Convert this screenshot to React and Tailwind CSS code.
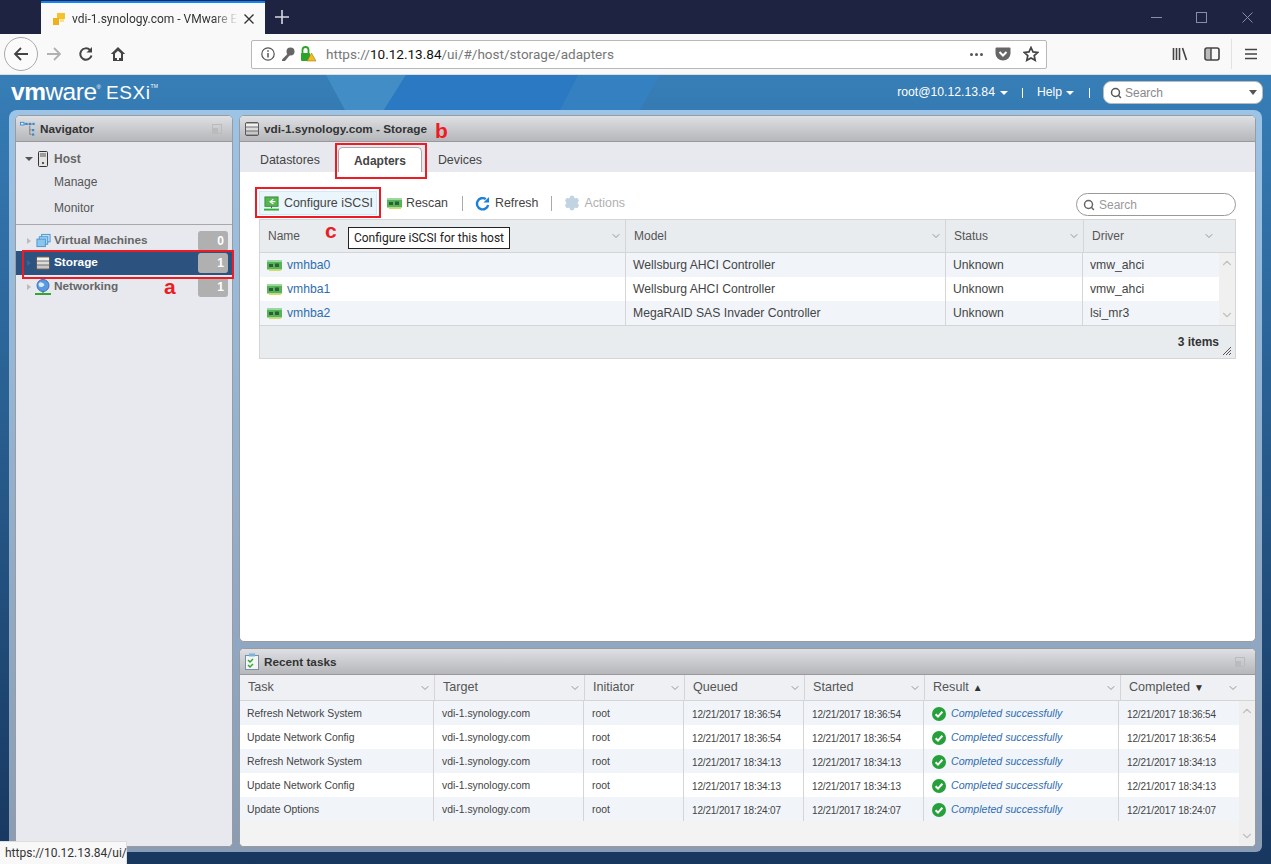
import { ChevronDown, ChevronUp, Search, Settings } from "lucide-react";

const adapters = [
  { name: "vmhba0", model: "Wellsburg AHCI Controller", driver: "vmw_ahci" },
  { name: "vmhba1", model: "Wellsburg AHCI Controller", driver: "vmw_ahci" },
  { name: "vmhba2", model: "MegaRAID SAS Invader Controller", driver: "lsi_mr3" },
];

const tasks = [
  { task: "Refresh Network System", time: "12/21/2017 18:36:54" },
  { task: "Update Network Config", time: "12/21/2017 18:36:54" },
  { task: "Refresh Network System", time: "12/21/2017 18:34:13" },
  { task: "Update Network Config", time: "12/21/2017 18:34:13" },
  { task: "Update Options", time: "12/21/2017 18:24:07" },
];

const StorageIcon = ({ className }) => (
  <svg viewBox="0 0 14 14" className={className}>
    <rect x="0.5" y="0.5" width="13" height="13" rx="1.5" fill="#6f6f6f" stroke="#5a5a5a" />
    <rect x="1" y="1.5" width="12" height="3" fill="#f0f0f0" />
    <rect x="1" y="5.5" width="12" height="3" fill="#dcdcdc" />
    <rect x="1" y="9.5" width="12" height="3" fill="#c8c8c8" />
  </svg>
);

const CardIcon = () => (
  <svg viewBox="0 0 15 11" className="w-[15px] h-[11px] shrink-0">
    <rect x="0" y="0.5" width="15" height="9" fill="#55b455" />
    <rect x="0" y="0.5" width="15" height="1.5" fill="#9ad89a" />
    <rect x="2" y="4" width="4" height="3" fill="#2f5f3a" />
    <rect x="8" y="3.5" width="4" height="3.5" fill="#2f5f3a" />
    <rect x="2" y="9.5" width="12" height="1.5" fill="#d4d96a" />
  </svg>
);

const CheckIcon = () => (
  <svg viewBox="0 0 14 14" className="w-[14px] h-[14px] shrink-0">
    <circle cx="7" cy="7" r="7" fill="#25a03a" />
    <path d="M3.6 7.2 6 9.6l4.4-4.8" fill="none" stroke="#fff" strokeWidth="2" />
  </svg>
);

const Caret = ({ className = "border-t-[#555]" }) => (
  <span className={`inline-block w-0 h-0 border-x-[4px] border-x-transparent border-t-[4px] ${className}`} />
);

const Panel = ({ icon, title, right, className, children }) => (
  <div className={`flex flex-col bg-white border border-[#9b9b9b] rounded-[5px] overflow-hidden ${className}`}>
    <div className="h-[26px] shrink-0 flex items-center px-[6px] gap-[5px] bg-gradient-to-b from-[#dfe0e3] to-[#b5b7ba] border-b border-[#999]">
      {icon}
      <span className="text-[11.75px] font-bold text-[#333]">{title}</span>
      {right && (
        <span className="ml-auto mr-[4px] w-[10px] h-[10px] border border-[#bbb] flex items-end">
          <i className="w-[5px] h-[5px] bg-[#bbb]" />
        </span>
      )}
    </div>
    {children}
  </div>
);

const NavRow = ({ icon, label, count, active, height }) => (
  <div className={`${height} flex items-center text-[11.8px] font-bold ${active ? "bg-[#2c5380] text-white" : "text-[#666]"}`}>
    <span className={`ml-[11px] w-0 h-0 border-y-[3px] border-y-transparent border-l-[4px] ${active ? "border-l-[#3f6390]" : "border-l-[#bbb]"}`} />
    <span className="ml-[3px] w-[18px] flex justify-center">{icon}</span>
    <span className="ml-[2px] flex-1">{label}</span>
    <span className="mr-[4px] w-[30px] h-[20px] rounded-[3px] bg-[#b0b0b0] text-white text-[12px] text-right pr-[4px] leading-[20px]">{count}</span>
  </div>
);

const HeaderCell = ({ label, mark, className = "" }) => (
  <div className={`flex items-center pl-[8px] pr-[3px] border-r border-[#d5d5d5] text-[#555] ${className}`}>
    <span>{label}</span>
    {mark && <span className="ml-[4px] text-[10px] text-[#333]">{mark}</span>}
    <ChevronDown className="ml-auto text-[#777]" size={12} strokeWidth={1.5} />
  </div>
);

export default function App() {
  return (
    <div className="relative w-[1271px] h-[864px] overflow-hidden flex flex-col font-['Liberation_Sans',Arial,sans-serif] bg-gradient-to-b from-[#3a85c0] to-[#17375f]">
      {/* browser tab strip */}
      <div className="h-[34px] shrink-0 bg-[#1e2341] flex items-end pl-[41px] text-white">
        <div className="w-[224px] h-[33px] bg-[#f9f9fa] border-t-2 border-[#0a84ff] flex items-center pl-[11px] font-['Roboto',sans-serif] text-[12px] text-[#333]">
          <svg viewBox="0 0 14 14" className="w-[14px] h-[14px] shrink-0">
            <rect x="5" y="1" width="8" height="6" fill="#f5c22b" />
            <rect x="1" y="6" width="6" height="7" fill="#f0b01a" />
            <rect x="8" y="7" width="4" height="3" fill="#f9e08a" />
          </svg>
          <span className="ml-[6px] w-[166px] whitespace-nowrap [mask-image:linear-gradient(to_right,#000_85%,transparent)]">vdi-1.synology.com - VMware E</span>
          <svg viewBox="0 0 10 10" className="w-[10px] h-[10px] ml-[6px]"><path d="M0.5.5l9 9M9.500.5l-9 9" stroke="#333" strokeWidth="1.4" /></svg>
        </div>
        <svg viewBox="0 0 14 14" className="w-[14px] h-[14px] ml-[10px] mb-[10px]"><path d="M7 0v14M0 7h14" stroke="#d8d9e0" strokeWidth="1.6" /></svg>
        <div className="ml-auto flex items-center h-full">
          <svg viewBox="0 0 11 11" className="w-[11px] h-[11px] mr-[34px]"><path d="M0 5.500h11" stroke="#8a8da3" /></svg>
          <svg viewBox="0 0 11 11" className="w-[11px] h-[11px] mr-[35px]"><rect x=".5" y=".5" width="10" height="10" fill="none" stroke="#8a8da3" /></svg>
          <svg viewBox="0 0 11 11" className="w-[11px] h-[11px] mr-[18px]"><path d="M.5.5l10 10M10.500.5l-10 10" stroke="#8a8da3" /></svg>
        </div>
      </div>

      {/* browser toolbar */}
      <div className="h-[41px] shrink-0 bg-[#f9f9fa] border-b border-[#ddd] flex items-center pl-[4px]">
        <div className="w-[34px] h-[34px] rounded-full border border-[#aaa] bg-[#fbfbfb] flex items-center justify-center">
          <svg viewBox="0 0 16 16" className="w-[16px] h-[16px]"><path d="M15 8H2M8 2 2 8l6 6" fill="none" stroke="#444" strokeWidth="1.8" /></svg>
        </div>
        <svg viewBox="0 0 16 16" className="w-[16px] h-[16px] ml-[8px]"><path d="M1 8h13M8 2l6 6-6 6" fill="none" stroke="#b1b1b1" strokeWidth="1.8" /></svg>
        <svg viewBox="0 0 16 16" className="w-[16px] h-[16px] ml-[16px]"><path d="M13.500 9.500A5.700 5.700 0 1 1 12 4" fill="none" stroke="#444" strokeWidth="2" /><path d="M14 1v5.500H8.500z" fill="#444" /></svg>
        <svg viewBox="0 0 16 16" className="w-[16px] h-[16px] ml-[16px]"><path d="M8 1 .8 8h2.200v7h10V8h2.200zM7 11h2v3H7z" fill="#444" fillRule="evenodd" /><path d="M5 12V7.500L8 4.700l3 2.800V12z" fill="#f9f9fa" /></svg>
        <div className="ml-[125px] w-[796px] h-[29px] bg-white border border-[#b8b8b8] rounded-[2px] flex items-center pl-[9px] pr-[7px] font-['Roboto',sans-serif] text-[13.55px] text-[#777]">
          <svg viewBox="0 0 14 14" className="w-[14px] h-[14px] shrink-0"><circle cx="7" cy="7" r="6.200" fill="none" stroke="#555" strokeWidth="1.200" /><path d="M7 6v4.500M7 3.200v1.500" stroke="#555" strokeWidth="1.500" /></svg>
          <svg viewBox="0 0 14 14" className="w-[14px] h-[14px] shrink-0 ml-[6px]"><circle cx="9.500" cy="4.500" r="4" fill="#666" /><path d="M7 6.500 1 12.500V14h3l5-6z" fill="#666" /></svg>
          <svg viewBox="0 0 16 16" className="w-[16px] h-[16px] shrink-0 ml-[5px]"><path d="M2.500 8V4a3 3 0 0 1 6 0v4" fill="none" stroke="#2aa52a" strokeWidth="1.800" /><rect x="1" y="7" width="9" height="8" rx="1" fill="#2aa52a" /><path d="M11.500 7 16 15H7z" fill="#f5b921" stroke="#8a6d10" strokeWidth=".5" /></svg>
          <span className="ml-[10px] whitespace-nowrap">https://<span className="text-[#111]">10.12.13.84</span>/ui/#/host/storage/adapters</span>
          <div className="ml-auto flex items-center">
            <span className="flex gap-[2px]"><i className="w-[3px] h-[3px] rounded-full bg-[#555]" /><i className="w-[3px] h-[3px] rounded-full bg-[#555]" /><i className="w-[3px] h-[3px] rounded-full bg-[#555]" /></span>
            <svg viewBox="0 0 16 16" className="w-[16px] h-[16px] ml-[12px]"><path d="M1.500 1.500h13a1 1 0 0 1 1 1v5a7.500 7 0 0 1-15 0v-5a1 1 0 0 1 1-1z" fill="#666" /><path d="m4.500 6 3.500 3.500L11.500 6" fill="none" stroke="#fff" strokeWidth="2" /></svg>
            <svg viewBox="0 0 16 16" className="w-[16px] h-[16px] ml-[12px]"><path d="m8 1.500 2 4.400 4.800.5-3.600 3.200 1 4.700L8 11.900l-4.200 2.400 1-4.700L1.200 6.400 6 5.900z" fill="none" stroke="#444" strokeWidth="1.700" /></svg>
          </div>
        </div>
        <svg viewBox="0 0 16 16" className="w-[16px] h-[16px] ml-[125px]"><path d="M1.500 2v12M4.500 2v12M7.500 2v12" stroke="#444" strokeWidth="1.600" /><path d="m10.500 2 4 12" stroke="#444" strokeWidth="1.600" /></svg>
        <svg viewBox="0 0 16 16" className="w-[16px] h-[16px] ml-[16px]"><rect x="1" y="2" width="14" height="12" rx="2" fill="none" stroke="#444" strokeWidth="1.600" /><rect x="2" y="3" width="5" height="10" fill="#bbb" /><path d="M7 2v12" stroke="#444" strokeWidth="1.400" /></svg>
        <span className="ml-[11px] w-px h-[30px] bg-[#e2e2e2]" />
        <svg viewBox="0 0 14 14" className="w-[14px] h-[14px] ml-[12px]"><path d="M1 2.500h12M1 7h12M1 11.500h12" stroke="#444" strokeWidth="1.700" /></svg>
      </div>

      {/* ESXi header */}
      <div className="relative h-[35px] shrink-0 flex items-center pl-[11px] pr-[8px] text-white text-[12px]">
        <svg viewBox="0 0 1271 35" className="absolute inset-0 w-[1271px] h-[35px]">
          <polygon points="326,0 406,0 384,35 345,35" fill="#438dc7" />
          <polygon points="406,0 578,0 560,35 384,35" fill="#2b78c3" />
          <polygon points="578,0 660,0 640,35 560,35" fill="#3580c1" />
        </svg>
        <span className="relative text-[24.5px] leading-none tracking-[-0.5px] font-bold">vm<span className="font-normal">ware</span></span>
        <span className="relative self-start mt-[9px] text-[6px] leading-none">®</span>
        <span className="relative ml-[5px] text-[19px] leading-none tracking-[0.6px]">ESXi</span>
        <span className="relative self-start mt-[9px] text-[5px] leading-none">TM</span>
        <div className="relative ml-auto flex items-center">
          <span className="text-[12.2px]">root@10.12.13.84</span>
          <Caret className="ml-[5px] border-t-white" />
          <span className="ml-[14px] mr-[14px] w-px h-[10px] bg-white" />
          <span className="text-[12.2px]">Help</span>
          <Caret className="ml-[4px] border-t-white" />
          <span className="ml-[15px] mr-[13px] w-px h-[10px] bg-white" />
          <div className="w-[160px] h-[23px] bg-white border border-[#bbb] rounded-[8px] flex items-center pl-[6px] pr-[5px] text-[#888]">
            <Search size={12} strokeWidth={3} className="text-[#555]" />
            <span className="ml-[3px]">Search</span>
            <Caret className="ml-auto border-t-[#555] border-x-[4px] border-t-[5px]" />
          </div>
        </div>
      </div>

      {/* app frame */}
      <div className="mx-[9px] h-[742px] flex gap-[6px] pt-[5px] pb-[5px] pl-[6px] pr-[6px] rounded-t-[8px] rounded-b-[6px] bg-gradient-to-b from-[#9bc4e7] to-[#8a9cb4]">
        <Panel
          className="w-[218px] shrink-0 bg-[#e8e9ef]"
          title="Navigator"
          right
          icon={
            <svg viewBox="0 0 18 18" className="w-[16px] h-[16px] -ml-[2px] -mr-[1px]">
              <path d="M2 3.500h12M11 5v10h2M11 10h2" fill="none" stroke="#778" strokeWidth="1" />
              <rect x="0.500" y="1.500" width="4" height="3" fill="#d8ecfa" stroke="#3a8ad0" />
              <rect x="6" y="2" width="2.500" height="2.500" fill="#3a8ad0" />
              <rect x="10" y="2" width="2.500" height="2.500" fill="#3a8ad0" />
              <rect x="14" y="2" width="2.500" height="2.500" fill="#3a8ad0" />
              <rect x="13.500" y="9" width="2.500" height="2.500" fill="#3a8ad0" />
              <rect x="13.500" y="14" width="2.500" height="2.500" fill="#3a8ad0" />
            </svg>
          }
        >
          <div className="flex-1 bg-[#e8e9ef] text-[12px]">
            <div className="h-[83px] border-b border-[#a8a8a8] text-[#555]">
              <div className="h-[34px] flex items-center font-bold text-[#666]">
                <Caret className="ml-[9px] border-t-[#555] border-x-[3.500px]" />
                <svg viewBox="0 0 10 16" className="ml-[5px] w-[10px] h-[16px]">
                  <rect x=".5" y=".5" width="9" height="15" rx="1" fill="#e4e4e4" stroke="#333" />
                  <path d="M2 3h6M2 5h6" stroke="#555" />
                  <rect x="4" y="11" width="2" height="2" fill="#555" />
                </svg>
                <span className="ml-[6px]">Host</span>
              </div>
              <div className="h-[25px] -mt-[6px] pl-[38px] leading-[25px]">Manage</div>
              <div className="h-[26px] pl-[38px] leading-[26px]">Monitor</div>
            </div>
            <div className="pt-[5px]">
              <NavRow
                height="h-[21px]"
                label="Virtual Machines"
                count="0"
                icon={
                  <svg viewBox="0 0 16 15" className="w-[15px] h-[15px]">
                    <rect x="6" y="1" width="9" height="8" fill="#bfe0f6" stroke="#4a95d0" />
                    <rect x="3.500" y="3.500" width="9" height="8" fill="#a8d4f2" stroke="#4a95d0" />
                    <rect x="1" y="6" width="9" height="8" fill="#8cc5ec" stroke="#4a95d0" />
                  </svg>
                }
              />
              <NavRow height="h-[24px]" label="Storage" count="1" active icon={<StorageIcon className="w-[14px] h-[14px]" />} />
              <NavRow
                height="h-[23px]"
                label="Networking"
                count="1"
                icon={
                  <svg viewBox="0 0 16 16" className="w-[16px] h-[16px]">
                    <circle cx="8" cy="6.500" r="6" fill="#5a9be0" stroke="#3a6fc0" />
                    <path d="M4 4c2-2 4 0 5 1s-1 3-3 3-3-2-2-4z" fill="#d8ecfa" />
                    <path d="M8 12.500v1.500" stroke="#555" />
                    <rect x="0" y="14" width="16" height="2" fill="#30a830" />
                  </svg>
                }
              />
            </div>
          </div>
        </Panel>

        <div className="flex-1 flex flex-col gap-[6px] min-w-0">
          <Panel
            className="h-[527px] shrink-0"
            title="vdi-1.synology.com - Storage"
            icon={<StorageIcon className="w-[14px] h-[14px] -ml-[1px]" />}
          >
            <div className="h-[30px] shrink-0 bg-[#e8e9ef] flex items-end text-[12.4px] text-[#444] pl-[20px]">
              <span className="mb-[2px]">Datastores</span>
              <span className="ml-[18px] w-[84px] h-[25px] pt-[1px] bg-white border border-b-0 border-[#aaa] rounded-t-[5px] flex items-center justify-center font-bold text-[12px] text-[#444]">Adapters</span>
              <span className="ml-[16px] mb-[2px]">Devices</span>
            </div>
            <div className="flex-1 px-[19px] pt-[19px] text-[12.2px] text-[#444]">
              <div className="h-[24px] flex items-center text-[12.4px]">
                <div className="w-[118px] h-[24px] bg-[#eaf5fc] border border-[#d3e8f5] flex items-center pl-[4px]">
                  <svg viewBox="0 0 16 16" className="w-[15px] h-[15px] shrink-0">
                    <rect x="1" y="1" width="14" height="10" fill="#55b84f" stroke="#3a8a3a" />
                    <path d="M10 3.500 6.500 6 10 8.500M6.500 6H12" fill="none" stroke="#fff" strokeWidth="1.300" />
                    <path d="M8 11v2" stroke="#555" />
                    <rect x="0" y="13.500" width="16" height="2" fill="#30b030" />
                  </svg>
                  <span className="ml-[5px] whitespace-nowrap">Configure iSCSI</span>
                </div>
                <span className="ml-[10px]"><CardIcon /></span>
                <span className="ml-[4px]">Rescan</span>
                <span className="ml-[14px] w-px h-[15px] bg-[#aaa]" />
                <svg viewBox="0 0 16 16" className="ml-[12px] w-[15px] h-[15px]"><path d="M14 9.500A6 6 0 1 1 11.500 3.300" fill="none" stroke="#1d7fd6" strokeWidth="2.600" /><path d="M15 1v6H9z" fill="#1d7fd6" /></svg>
                <span className="ml-[5px]">Refresh</span>
                <span className="ml-[13px] w-px h-[15px] bg-[#aaa]" />
                <Settings size={16} strokeWidth={2.500} className="ml-[12px] text-[#c2d3e2] fill-[#c2d3e2]" />
                <span className="ml-[4px] text-[#b0b0b0]">Actions</span>
                <div className="ml-auto mt-[3px] w-[160px] h-[23px] border border-[#999] rounded-full flex items-center pl-[6px] text-[#999] text-[12px]">
                  <Search size={12} strokeWidth={3} className="text-[#666]" />
                  <span className="ml-[4px]">Search</span>
                </div>
              </div>

              <div className="mt-[4px] border border-[#d5d5d5]">
                <div className="h-[33px] grid grid-cols-[366px_320px_138px_1fr] bg-[#e9ecef] border-b border-[#d5d5d5] text-[12px]">
                  <HeaderCell label="Name" />
                  <HeaderCell label="Model" className="pl-[7px]" />
                  <HeaderCell label="Status" className="pl-[7px]" />
                  <HeaderCell label="Driver" className="pl-[7px] border-r-0 pr-[20px]" />
                </div>
                <div className="flex">
                  <div className="flex-1">
                    {adapters.map((row, i) => (
                      <div key={row.name} className={`h-[24px] grid grid-cols-[366px_320px_137px_1fr] ${i % 2 === 0 ? "bg-[#f1f5fa]" : "bg-white"}`}>
                        <div className="flex items-center pl-[7px] border-r border-[#d5d5d5] text-[#2f6db0]"><CardIcon /><span className="ml-[5px]">{row.name}</span></div>
                        <div className="flex items-center pl-[7px] border-r border-[#d5d5d5]">{row.model}</div>
                        <div className="flex items-center pl-[7px] border-r border-[#d5d5d5]">Unknown</div>
                        <div className="flex items-center pl-[7px]">{row.driver}</div>
                      </div>
                    ))}
                  </div>
                  <div className="w-[16px] bg-[#f0f0f0] flex flex-col justify-between items-center py-[3px] text-[#c0c0c0]">
                    <ChevronUp size={14} strokeWidth={2} />
                    <ChevronDown size={14} strokeWidth={2} />
                  </div>
                </div>
                <div className="h-[33px] bg-[#e9ecef] border-t border-[#d5d5d5] flex items-center justify-end pr-[16px] font-bold text-[12px] text-[#333] relative">
                  3 items
                  <svg viewBox="0 0 8 8" className="absolute right-[4px] bottom-[3px] w-[8px] h-[8px]"><path d="M8 0 0 8M8 3 3 8M8 6 6 8" stroke="#555" /></svg>
                </div>
              </div>
            </div>
          </Panel>

          <Panel
            className="flex-1 bg-[#f3f3f3]"
            title="Recent tasks"
            right
            icon={
              <svg viewBox="0 0 14 17" className="w-[14px] h-[17px] -ml-[1px]">
                <rect x=".5" y="2.500" width="13" height="14" fill="#f4f4f4" stroke="#7a8fa5" />
                <rect x="4" y="0.500" width="6" height="3" fill="#79b4e0" />
                <path d="m3 7 2 2 3-3M3 12l2 2 3-3" fill="none" stroke="#2fa83a" strokeWidth="1.500" />
              </svg>
            }
          >
            <div className="h-[26px] shrink-0 grid grid-cols-[195px_150px_100px_120px_120px_196px_1fr] bg-[#eef0f4] border-b border-[#d5d5d5] text-[12.6px]">
              <HeaderCell label="Task" />
              <HeaderCell label="Target" className="pl-[7px]" />
              <HeaderCell label="Initiator" />
              <HeaderCell label="Queued" />
              <HeaderCell label="Started" />
              <HeaderCell label="Result" mark="▲" />
              <HeaderCell label="Completed" mark="▼" className="border-r-0 pr-[16px]" />
            </div>
            <div className="flex-1 flex min-h-0 bg-[#f3f3f3]">
              <div className="flex-1">
                {tasks.map((row, i) => (
                  <div key={i} className={`h-[24px] grid grid-cols-[194px_150px_100px_120px_120px_195px_1fr] text-[10.4px] text-[#444] ${i % 2 === 0 ? "bg-[#f1f5fa]" : "bg-white"}`}>
                    <div className="flex items-center pl-[7px] pt-[2px] border-r border-[#d5d5d5]">{row.task}</div>
                    <div className="flex items-center pl-[8px] pt-[2px] border-r border-[#d5d5d5]">vdi-1.synology.com</div>
                    <div className="flex items-center pl-[8px] pt-[2px] border-r border-[#d5d5d5]">root</div>
                    <div className="flex items-center pl-[8px] pt-[2px] border-r border-[#d5d5d5] text-[10px] tracking-[-0.15px]">{row.time}</div>
                    <div className="flex items-center pl-[8px] pt-[2px] border-r border-[#d5d5d5] text-[10px] tracking-[-0.15px]">{row.time}</div>
                    <div className="flex items-center pl-[8px] pt-[2px] border-r border-[#d5d5d5] italic text-[10.6px] text-[#2f6db0]"><CheckIcon /><span className="ml-[5px]">Completed successfully</span></div>
                    <div className="flex items-center pl-[8px] pt-[2px] text-[10px] tracking-[-0.15px]">{row.time}</div>
                  </div>
                ))}
              </div>
              <div className="w-[16px] bg-[#efefef] flex flex-col justify-between items-center py-[3px] text-[#c0c0c0]">
                <ChevronUp size={14} strokeWidth={2} />
                <ChevronDown size={14} strokeWidth={2} />
              </div>
            </div>
          </Panel>
        </div>
      </div>

      {/* screenshot annotations, tooltip and link status sit over the page */}
      <div className="absolute left-[22px] top-[250px] w-[212px] h-[29px] border-2 border-[#ed1c24]" />
      <div className="absolute left-[335px] top-[143px] w-[92px] h-[36px] border-2 border-[#ed1c24]" />
      <div className="absolute left-[255px] top-[187px] w-[126px] h-[31px] border-2 border-[#ed1c24]" />
      <span className="absolute left-[164px] top-[275px] text-[21px] leading-[24px] font-bold text-[#ed1c24]">a</span>
      <span className="absolute left-[435px] top-[119px] text-[21px] leading-[24px] font-bold text-[#ed1c24]">b</span>
      <span className="absolute left-[325px] top-[219px] text-[21px] leading-[24px] font-bold text-[#ed1c24]">c</span>
      <div className="absolute left-[348px] top-[227px] w-[162px] h-[22px] bg-white border border-[#222] flex items-center justify-center font-['Roboto',sans-serif] text-[12px] text-[#222]">Configure iSCSI for this host</div>
      <div className="absolute left-0 top-[841px] w-[127px] h-[23px] bg-[#f8f8f8] border-t border-r border-[#ddd] flex items-center pl-[5px] font-['Roboto',sans-serif] text-[12px] text-[#333]">https://10.12.13.84/ui/</div>
    </div>
  );
}
